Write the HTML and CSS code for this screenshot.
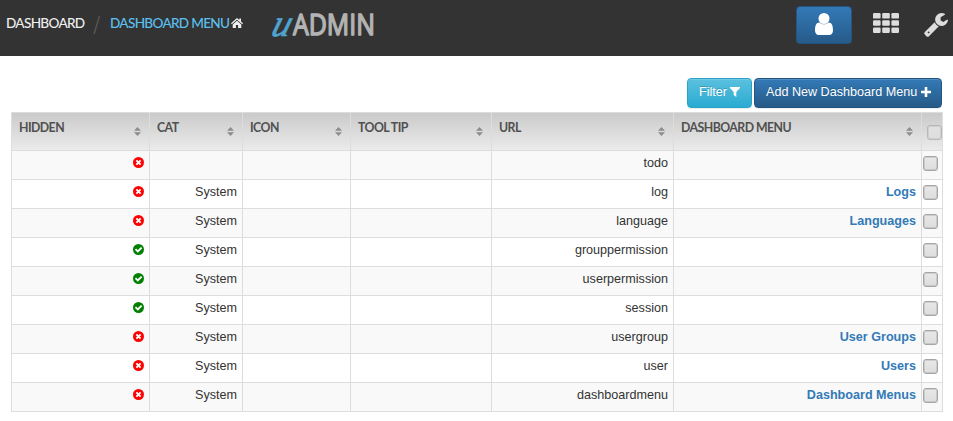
FILE: index.html
```
<!DOCTYPE html>
<html lang="en">
<head>
<meta charset="utf-8">
<title>Dashboard Menu</title>
<link rel="stylesheet" href="styles.css">
</head>
<body>
<svg class="defs" width="0" height="0" aria-hidden="true">
  <symbol id="no" viewBox="0 0 12 12"><circle cx="6" cy="6" r="6" fill="red"/><path d="M3.700 3.700l4.600 4.600M8.300 3.700L3.700 8.300" stroke="#fff" stroke-width="2"/></symbol>
  <symbol id="yes" viewBox="0 0 12 12"><circle cx="6" cy="6" r="6" fill="green"/><path d="M2.700 5.700l2.500 2.500 4.200-4.200" fill="none" stroke="#fff" stroke-width="2"/></symbol>
  <symbol id="sort" viewBox="0 0 7 9"><path d="M0 3.800L3.500 0 7 3.800zM0 5.200h7L3.500 9z" fill="#8c8c8c"/></symbol>
</svg>
<header class="topbar">
  <nav class="crumbs">
    <a class="root">DASHBOARD</a>
    <svg class="slash" width="8" height="20"><path d="M1 19L6.500 1" stroke="#555" stroke-width="1.5"/></svg>
    <a class="current">DASHBOARD MENU</a>
    <svg class="home" width="12" height="11" viewBox="0 0 12 11"><path d="M6 0L0 5.300l.8.900L6 1.700l5.200 4.500.8-.9-2-1.800V.5H8.300v1.400z" fill="#eee"/><path d="M1.700 6.400L6 2.700l4.300 3.700V10H7.100V7H4.900v3H1.700z" fill="#eee"/></svg>
  </nav>
  <svg class="logo" width="120" height="56" viewBox="0 0 120 56">
    <text class="logo-u" transform="translate(5 35.500) skewX(-17)" x="0" y="0" textLength="18.500" lengthAdjust="spacingAndGlyphs">u</text>
    <text class="logo-name" x="28" y="34.500" textLength="82" lengthAdjust="spacingAndGlyphs">ADMIN</text>
  </svg>
  <div class="tools">
    <a class="user"><svg width="18" height="22" viewBox="0 0 18 22"><path d="M4.500 9.500C1 9.500 0 13 0 17.500 0 20 1.500 22 3.800 22h10.400c2.300 0 3.800-2 3.800-4.500 0-4.500-1-8-4.500-8-1.200 1.100-2.700 1.800-4.500 1.800s-3.300-.7-4.500-1.800z" fill="#fff"/><circle cx="9" cy="5.500" r="5.500" fill="#fff"/></svg></a>
    <svg class="apps" width="26" height="20" fill="#ddd"><rect width="7.600" height="5.600" rx="1.200"/><rect x="9.200" width="7.600" height="5.600" rx="1.200"/><rect x="18.400" width="7.600" height="5.600" rx="1.200"/><rect y="7.200" width="7.600" height="5.600" rx="1.200"/><rect x="9.200" y="7.200" width="7.600" height="5.600" rx="1.200"/><rect x="18.400" y="7.200" width="7.600" height="5.600" rx="1.200"/><rect y="14.400" width="7.600" height="5.600" rx="1.200"/><rect x="9.200" y="14.400" width="7.600" height="5.600" rx="1.200"/><rect x="18.400" y="14.400" width="7.600" height="5.600" rx="1.200"/></svg>
    <svg class="wrench" width="24" height="24" viewBox="0 0 1664 1664"><path fill="#ddd" d="M384 1344q0-26-19-45t-45-19-45 19-19 45 19 45 45 19 45-19 19-45zm644-420l-682 682q-37 37-90 37-52 0-91-37L59 1498q-38-36-38-90 0-53 38-91l681-681q39 98 114.500 173.500T1028 924zm634-435q0 39-23 106-47 134-164.500 217.500T1216 896q-185 0-316.500-131.500T768 448t131.500-316.500T1216 0q58 0 121.500 16.500T1445 63q16 11 16 28t-16 28l-293 169v224l193 107q5-3 79-48.500t135.500-81T1630 454q15 0 23.500 10t8.500 25z"/></svg>
  </div>
</header>
<main>
  <div class="actions">
    <a class="btn info">Filter <svg width="10" height="10" viewBox="0 0 10 10"><path d="M0 0h10v1L6.300 4.900V10L3.700 8V4.900L0 1z" fill="#fff"/></svg></a>
    <a class="btn primary">Add New Dashboard Menu <svg width="10" height="10" viewBox="0 0 10 10"><path d="M3.700 0h2.600v3.700H10v2.600H6.300V10H3.700V6.300H0V3.700h3.700z" fill="#fff"/></svg></a>
  </div>
  <table>
    <colgroup><col class="c-hidden"><col class="c-cat"><col class="c-icon"><col class="c-tip"><col class="c-url"><col class="c-menu"><col class="c-check"></colgroup>
    <thead><tr>
      <th><div class="head"><span>HIDDEN</span><svg><use href="#sort"/></svg></div></th>
      <th><div class="head"><span>CAT</span><svg><use href="#sort"/></svg></div></th>
      <th><div class="head"><span>ICON</span><svg><use href="#sort"/></svg></div></th>
      <th><div class="head"><span class="tip">TOOL TIP</span><svg><use href="#sort"/></svg></div></th>
      <th><div class="head"><span>URL</span><svg><use href="#sort"/></svg></div></th>
      <th><div class="head"><span class="menu">DASHBOARD MENU</span><svg><use href="#sort"/></svg></div></th>
      <th class="check"><i class="box"></i></th>
    </tr></thead>
    <tbody>
      <tr><td><svg class="state"><use href="#no"/></svg></td><td></td><td></td><td></td><td>todo</td><td></td><td class="check"><i class="box"></i></td></tr>
      <tr><td><svg class="state"><use href="#no"/></svg></td><td>System</td><td></td><td></td><td>log</td><td><a>Logs</a></td><td class="check"><i class="box"></i></td></tr>
      <tr><td><svg class="state"><use href="#no"/></svg></td><td>System</td><td></td><td></td><td>language</td><td><a>Languages</a></td><td class="check"><i class="box"></i></td></tr>
      <tr><td><svg class="state"><use href="#yes"/></svg></td><td>System</td><td></td><td></td><td>grouppermission</td><td></td><td class="check"><i class="box"></i></td></tr>
      <tr><td><svg class="state"><use href="#yes"/></svg></td><td>System</td><td></td><td></td><td>userpermission</td><td></td><td class="check"><i class="box"></i></td></tr>
      <tr><td><svg class="state"><use href="#yes"/></svg></td><td>System</td><td></td><td></td><td>session</td><td></td><td class="check"><i class="box"></i></td></tr>
      <tr><td><svg class="state"><use href="#no"/></svg></td><td>System</td><td></td><td></td><td>usergroup</td><td><a>User Groups</a></td><td class="check"><i class="box"></i></td></tr>
      <tr><td><svg class="state"><use href="#no"/></svg></td><td>System</td><td></td><td></td><td>user</td><td><a>Users</a></td><td class="check"><i class="box"></i></td></tr>
      <tr><td><svg class="state"><use href="#no"/></svg></td><td>System</td><td></td><td></td><td>dashboardmenu</td><td><a>Dashboard Menus</a></td><td class="check"><i class="box"></i></td></tr>
    </tbody>
  </table>
</main>
</body>
</html>
```
FILE: styles.css
```
* { box-sizing: border-box; }
body { margin: 0; background: #fff; color: #333; font: 12.6px/18px "Liberation Sans", Arial, sans-serif; overflow: hidden; }
svg { flex: none; }
.defs { display: none; }
.topbar { height: 56px; background: #333; display: flex; align-items: flex-start; }
.crumbs { width: 265px; padding: 13px 0 0 6px; display: flex; font: 500 13.6px/20px Lato, sans-serif; white-space: nowrap; }
.root { width: 79px; color: #eee; letter-spacing: -0.7px; }
.slash { margin: 2px 9px 0 8px; }
.current { width: 121px; color: #5bc0f0; letter-spacing: -0.7px; }
.home { margin-top: 5px; }
.logo { overflow: visible; }
.logo-u { font: italic 38px "Liberation Serif", serif; fill: #4fa3cf; stroke: #4fa3cf; stroke-width: .7; }
.logo-name { font: 400 30px "Open Sans", sans-serif; fill: #b3b3b3; stroke: #b3b3b3; stroke-width: 1.5; stroke-linejoin: round; }
.tools { margin-left: auto; padding-right: 5px; display: flex; }
.user { width: 56px; height: 38px; margin-top: 6px; border: 1px solid #245580; border-radius: 4px; background: linear-gradient(#337ab7, #265a88); display: flex; justify-content: center; padding-top: 6px; }
.apps { margin: 13px 0 0 21px; }
.wrench { margin: 13px 0 0 25px; }
main { padding: 22px 10px 0 11px; }
.actions { display: flex; justify-content: flex-end; gap: 2px; height: 34px; padding-right: 1px; }
.btn { height: 30px; border: 1px solid; border-radius: 4px; color: #fff; padding: 4px 0 0 11px; line-height: 18px; white-space: nowrap; text-shadow: 0 -1px 0 rgba(0,0,0,.2); box-shadow: inset 0 1px 0 rgba(255,255,255,.15), 0 1px 1px rgba(0,0,0,.075); }
.btn svg { vertical-align: -1px; }
.info { width: 65px; background: linear-gradient(#5bc0de, #2aabd2); border-color: #28a4c9; }
.primary { width: 188px; background: linear-gradient(#337ab7, #265a88); border-color: #245580; }
table { width: 932px; table-layout: fixed; border-collapse: separate; border-spacing: 0; border-left: 1px solid #ddd; }
.c-hidden { width: 138px; }
.c-cat { width: 93px; }
.c-icon { width: 108px; }
.c-tip { width: 141px; }
.c-url { width: 182px; }
.c-menu { width: 248px; }
.c-check { width: 21px; }
th { height: 39px; padding: 0; border: solid #ddd; border-width: 1px 1px 1px 0; background: linear-gradient(#cacaca, #ebebeb); vertical-align: top; }
.head { display: flex; justify-content: space-between; padding: 6px 8px 0 7px; font: 700 12.3px/18px Lato, sans-serif; color: #505050; letter-spacing: -.55px; white-space: nowrap; }
.head svg { width: 7px; height: 9px; margin-top: 8px; }
td { height: 29px; padding: 3px 5px 7px 0; border: solid #ddd; border-width: 0 1px 1px 0; text-align: right; vertical-align: top; white-space: nowrap; }
tbody tr:nth-child(odd) { background: #f9f9f9; }
td a { color: #337ab7; font-weight: 700; }
.state { display: block; width: 11px; height: 11px; margin: 3px 0 0 auto; }
td.check { padding: 5px 0 0 1px; }
th.check { padding: 12px 0 0 5px; }
.box { display: block; width: 15px; height: 15px; border: 1px solid #a5a5a5; border-radius: 3px; background: linear-gradient(#e8e8e8, #ddd); box-shadow: inset 0 0 0 1px rgba(150,150,150,.3); }
th .box { opacity: .65; }
```
